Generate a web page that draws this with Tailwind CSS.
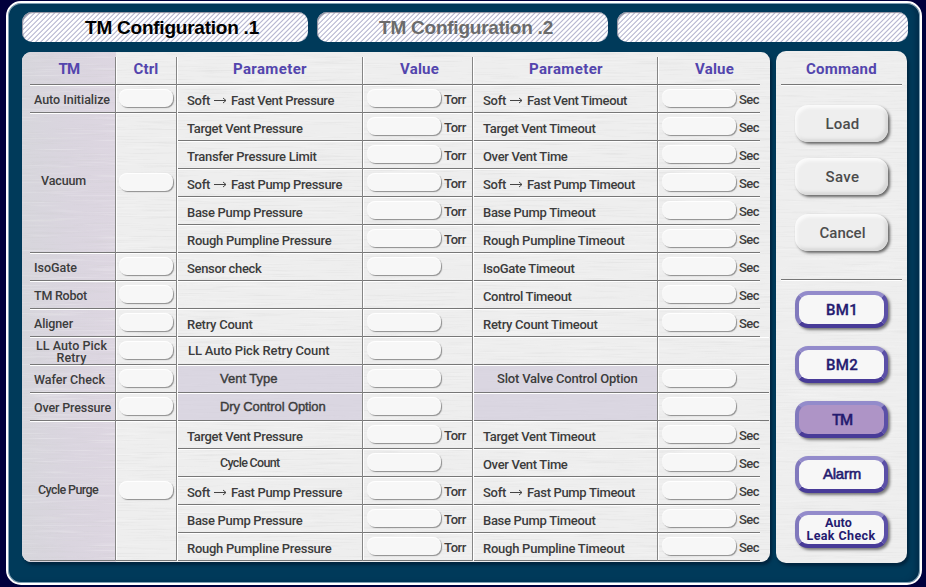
<!DOCTYPE html>
<html lang="en">
<head>
<meta charset="utf-8">
<title>TM Configuration</title>
<script src="https://cdn.jsdelivr.net/npm/@tailwindcss/browser@4"></script>
</head>
<body class="w-[926px] h-[587px] overflow-hidden bg-[#00003c] font-['Roboto','Liberation_Sans',sans-serif]">
<svg class="absolute size-0" aria-hidden="true">
  <filter id="brushed" x="0" y="0" width="100%" height="100%">
    <feTurbulence type="fractalNoise" baseFrequency="0.018 0.7" numOctaves="3" seed="7"/>
    <feColorMatrix values="0 0 0 0 0.6  0 0 0 0 0.6  0 0 0 0 0.6  3 0 0 0 -1.6"/>
  </filter>
  <filter id="brushedLight" x="0" y="0" width="100%" height="100%">
    <feTurbulence type="fractalNoise" baseFrequency="0.015 0.6" numOctaves="3" seed="31"/>
    <feColorMatrix values="0 0 0 0 1  0 0 0 0 1  0 0 0 0 1  3 0 0 0 -1.6"/>
  </filter>
</svg>
<div class="px-[6px] pt-px">
<div class="w-[916px] h-[584px] rounded-[15px] border-2 border-white bg-[#003a5a] shadow-[inset_0_0_0_1px_#7e9fb3,inset_-4px_0_5px_#002c4a] pl-[14px] pt-[9px]">
  <nav class="flex gap-[9px] h-[30px] text-[19px] font-bold font-['Liberation_Sans',sans-serif] leading-[31px] text-center">
    <div class="w-[286px] rounded-[10px] shadow-[inset_1px_1px_1px_#8b8b9b] bg-[repeating-linear-gradient(135deg,#fff_0px,#fff_1.6px,#b9b9d2_2.4px,#b9b9d2_2.7px,#fff_3.54px)] pl-[14px] text-black"><span data-w="174">TM Configuration .1</span></div>
    <div class="w-[291px] rounded-[10px] shadow-[inset_1px_1px_1px_#8b8b9b] bg-[repeating-linear-gradient(135deg,#fff_0px,#fff_1.6px,#b9b9d2_2.4px,#b9b9d2_2.7px,#fff_3.54px)] pl-[7px] text-[#6b6b6b]"><span data-w="174">TM Configuration .2</span></div>
    <div class="w-[291px] rounded-[10px] shadow-[inset_1px_1px_1px_#8b8b9b] bg-[repeating-linear-gradient(135deg,#fff_0px,#fff_1.6px,#b9b9d2_2.4px,#b9b9d2_2.7px,#fff_3.54px)]"></div>
  </nav>
  <div class="flex gap-[6px] pt-[9px]">
    <main class="relative mt-px w-[748px] h-[510px] rounded-[9px] overflow-hidden bg-[#eee] shadow-[2px_3px_3px_#00253f]">
      <div class="absolute inset-y-0 left-0 w-[94px] bg-linear-to-r from-[#d7d6dc] via-[#dad5df] to-[#ddd6e1]"></div>
      <svg class="absolute inset-0 size-full opacity-25"><rect width="100%" height="100%" filter="url(#brushed)"/></svg>
      <svg class="absolute inset-0 size-full opacity-25"><rect width="100%" height="100%" filter="url(#brushedLight)"/></svg>
      <div id="table" class="relative flex pt-[5px] text-[13px] font-medium text-[#3c3c3c]"></div>
    </main>
    <aside class="relative w-[131px] h-[512px] rounded-[10px] overflow-hidden bg-[#eee] shadow-[2px_3px_3px_#00253f]">
      <svg class="absolute inset-0 size-full opacity-20"><rect width="100%" height="100%" filter="url(#brushed)"/></svg>
      <svg class="absolute inset-0 size-full opacity-25"><rect width="100%" height="100%" filter="url(#brushedLight)"/></svg>
      <div class="relative px-[5px] text-center">
        <h2 class="h-[34px] border-b border-[#777] shadow-[0_1px_#fff] pt-[7px] text-[15px] leading-[22px] font-bold text-[#5345ad]"><span data-w="71">Command</span></h2>
        <div id="actions" class="relative flow-root h-[195px] border-b border-[#777] shadow-[0_1px_#fff] text-[15px] font-medium text-[#4c4c4c]"></div>
        <div id="modules" class="flex flex-col items-center gap-[18px] pt-[11px] font-bold text-[#251b70]"></div>
      </div>
    </aside>
  </div>
</div>
</div>
<script>
const t = (s, w, cls = '') => `<span class="inline-block whitespace-nowrap ${cls}" data-w="${w}">${s}</span>`;
const head = (s, w, pad) => `<div class="flex h-[28px] border-b border-[#777] justify-center text-[15px] leading-[25px] font-bold text-[#5345ad] ${pad}">${t(s, w)}</div>`;
const field = w => `<div class="${w} h-[18px] shrink-0 rounded-[8px] bg-[#f7f7f7] shadow-[inset_0_1px_1px_#fff,1px_1px_1px_#8d8d8d]"></div>`;
const line = ' border-b border-[#777] shadow-[inset_0_1px_#fff]';
const colBase = 'shrink-0 border-r border-[#858585] shadow-[inset_1px_0_#fff]';
const arrow = '<svg class="inline-block w-[13px] h-[8px] mx-[4px] align-[1px]" viewBox="0 0 13 8" fill="none" stroke="#444"><path d="M0 4.5H12M9 2L12 4.5L9 7"/></svg>';

const tm = [
  ['h-[28px]', 'Auto Initialize', 76, 'pl-[4px] pt-[5px]'], ['h-[140px]', 'Vacuum', 45, 'pl-[11px] pt-[58px]'],
  ['h-[28px]', 'IsoGate', 43, 'pl-[4px] pt-[5px]'], ['h-[28px]', 'TM Robot', 53, 'pl-[4px] pt-[5px]'],
  ['h-[28px]', 'Aligner', 39, 'pl-[4px] pt-[5px]'], ['h-[28px]', null, 0, 'pl-[6px] pt-[3px]'],
  ['h-[28px]', 'Wafer Check', 71, 'pl-[4px] pt-[5px]'], ['h-[28px]', 'Over Pressure', 77, 'pl-[4px] pt-[5px]'],
  ['h-[140px]', 'Cycle Purge', 60, 'pl-[8px] pt-[59px]']];
const c1 = tm.map(([h, s, w, p]) => `<div class="${h} ${p} ${line} text-[12.5px] leading-[20px]">${s ? t(s, w)
  : `<div class="flex flex-col items-center w-[71px] leading-[12px]">${t('LL Auto Pick', 71)}${t('Retry', 30)}</div>`}</div>`).join('');
const c2 = tm.map(([h]) => `<div class="${h} ${line} flex ${h === 'h-[28px]' ? 'pt-[4px]' : 'pt-[60px]'} pl-[3px]">${field('w-[54px]')}</div>`).join('');

const left = [['Soft|Fast Vent Pressure', 148], ['Target Vent Pressure', 116], ['Transfer Pressure Limit', 130], ['Soft|Fast Pump Pressure', 156],
  ['Base Pump Pressure', 116], ['Rough Pumpline Pressure', 145], ['Sensor check', 75], ['', 0], ['Retry Count', 66], ['LL Auto Pick Retry Count', 142, 'u'],
  ['Vent Type', 58, 'v'], ['Dry Control Option', 106, 'v'], ['Target Vent Pressure', 116], ['Cycle Count', 60, 'c'],
  ['Soft|Fast Pump Pressure', 156], ['Base Pump Pressure', 116], ['Rough Pumpline Pressure', 145]];
const right = [['Soft|Fast Vent Timeout', 145], ['Target Vent Timeout', 113], ['Over Vent Time', 85], ['Soft|Fast Pump Timeout', 153],
  ['Base Pump Timeout', 113], ['Rough Pumpline Timeout', 142], ['IsoGate Timeout', 92], ['Control Timeout', 89], ['Retry Count Timeout', 115], ['', 0],
  ['Slot Valve Control Option', 141, 's'], ['', 0, 's'], ['Target Vent Timeout', 113], ['Over Vent Time', 85],
  ['Soft|Fast Pump Timeout', 153], ['Base Pump Timeout', 113], ['Rough Pumpline Timeout', 142]];
const kinds = {
  n: 'pl-[9px] pt-[6px]', u: 'pl-[10px] pt-[4px]', c: "pl-[42px] pt-[4px] text-[12.5px]",
  v: "pl-[42px] pt-[4px] font-['Liberation_Sans'] [-webkit-text-stroke:0.4px_#3c3c3c] bg-[#cdc6d8]/60", s: 'pl-[23px] pt-[4px] bg-[#cdc6d8]/60' };
const param = rows => rows.map(([s, w, k = 'n']) => {
  const [a, b] = s.split('|');
  const body = b ? t(a, 23) + arrow + t(b, w - 45) : s ? t(s, w - 0.5) : '';
  return `<div class="ml-px h-[28px] ${kinds[k]} ${line} leading-[20px] whitespace-nowrap">${body}</div>`;
}).join('');
const value = (units, wide) => [...units].map((u, i) => `<div class="h-[28px] flex pl-[4px] pt-[4px] gap-[2px] ${line} ${wide && i > 8 && i < 12 ? 'mr-[-9px]' : ''} leading-[22px]">${u === '-' ? '' : field('w-[74px]')}${
  u === 'T' ? t('Torr', 22, 'pl-px') : u === 'S' ? t('Sec', 20, 'pl-px') : ''}</div>`).join('');

document.getElementById('table').innerHTML = `
  <div class="w-[94px] pl-[8px] shrink-0 border-r border-[#858585]">${head('TM', 21, 'pr-[7px]')}${c1}</div>
  <div class="w-[61px] ${colBase}">${head('Ctrl', 25, '')}${c2}</div>
  <div class="w-[186px] ${colBase}">${head('Parameter', 74, 'pl-px')}${param(left)}</div>
  <div class="w-[110px] ${colBase}">${head('Value', 39, 'pl-[4px]')}${value('TTTTTTN-NNNNTNTTT', false)}</div>
  <div class="w-[185px] ${colBase}">${head('Parameter', 74, 'pl-[2px]')}${param(right)}</div>
  <div class="w-[102px] shrink-0 shadow-[inset_1px_0_#fff]">${head('Value', 39, 'pl-[11px]')}${value('SSSSSSSSS-NNSSSSS', true)}</div>`;

document.getElementById('actions').innerHTML = [['Load', 34, 'mt-[20px]'], ['Save', 34, 'mt-[16px]'], ['Cancel', 46, 'mt-[19px]']].map(([s, w, m]) =>
  `<button class="block ${m} ml-[14px] w-[93px] h-[37px] rounded-[13px] bg-[#eee] shadow-[inset_2px_3px_3px_#fafafa,inset_-3px_-3px_3px_#d9d9d9,2px_2px_3px_#666]">${t(s, w, 'pt-[2px] pl-[2px]')}</button>`).join('');

const mod = 'w-[93px] h-[37px] rounded-[13px] border-4 border-t-[#938bcb] border-l-[#8179bd] border-r-[#5b50a7] border-b-[#483b98] shadow-[2px_2px_3px_#777]';
document.getElementById('modules').innerHTML = [['BM1', 32], ['BM2', 32], ['TM', 20], ['Alarm', 38], ['Auto', 27]].map(([s, w]) => {
  if (s === 'Auto') return `<button class="${mod} bg-[#f7f7f7] text-[12.5px]"><span class="flex flex-col items-center leading-[13px] -mt-[2px] -ml-px">${t('Auto', 27, 'mr-[5px]')}${t('Leak Check', 69)}</span></button>`;
  return `<button class="${mod} ${s === 'TM' ? 'bg-[#ae94c6]' : 'bg-[#f7f7f7]'} text-[15px] ${s === 'Alarm' ? "font-['Liberation_Sans'] font-medium [-webkit-text-stroke:0.6px_#251b70]" : 'font-medium pt-[2px] [-webkit-text-stroke:0.3px_#251b70]'}">${t(s, w, 'pl-px')}</button>`;
}).join('');

// Track each label out or in so that it fills its design width.
function fitLabels() {
  document.querySelectorAll('[data-w]').forEach(el => {
    el.style.letterSpacing = '0px';
    const range = document.createRange();
    range.selectNodeContents(el);
    const n = el.textContent.length;
    el.style.letterSpacing = ((el.dataset.w - range.getBoundingClientRect().width) / n).toFixed(3) + 'px';
  });
}
fitLabels();
window.addEventListener('load', fitLabels);
document.fonts.ready.then(fitLabels);
</script>
</body>
</html>
